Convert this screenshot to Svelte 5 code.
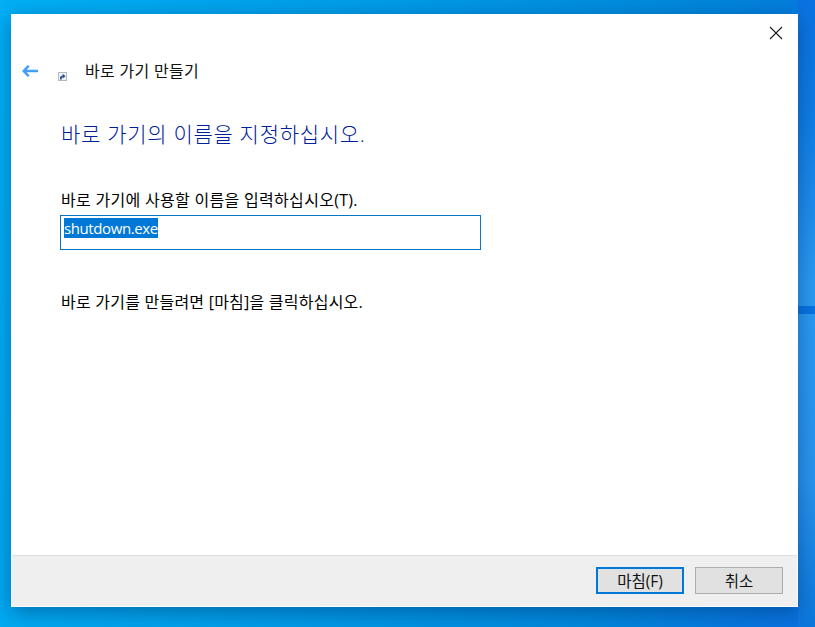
<script lang="ts">
  let name = 'shutdown.exe';
</script>

<div class="desktop">
  <div class="strip"></div>
  <div class="window">
    <div class="titlebar">
      <button class="close" aria-label="닫기">
        <svg width="14" height="14" viewBox="0 0 14 14"><path d="M1 1L13 13M13 1L1 13" stroke="#1a1a1a" stroke-width="1.1" fill="none" /></svg>
      </button>
    </div>
    <div class="nav">
      <svg class="back" width="16" height="12" viewBox="0 0 16 12"><path d="M6.7 0.8L1.7 6L6.7 11.2M1.7 6H16" stroke="#429ffa" stroke-width="2.5" fill="none" /></svg>
      <svg class="shortcut" width="9" height="9" viewBox="0 0 9 9">
        <rect x="0.5" y="0.5" width="8" height="8" fill="#f2f2f2" stroke="#b4b8bd" />
        <path d="M2 7.5V4.8L4.6 3.4V1.8L7.6 4.2L4.6 6.4V5L3.8 5.5V7.5Z" fill="#24508f" />
      </svg>
      <span class="title">바로 가기 만들기</span>
    </div>
    <div class="content">
      <h1>바로 가기의 이름을 지정하십시오.</h1>
      <label for="sname">바로 가기에 사용할 이름을 입력하십시오(T).</label>
      <div class="input" id="sname"><span class="sel">{name}</span></div>
      <p>바로 가기를 만들려면 [마침]을 클릭하십시오.</p>
    </div>
    <div class="footer">
      <button class="btn primary">마침(F)</button>
      <button class="btn">취소</button>
    </div>
  </div>
</div>

<style>
  :global(body) { margin: 0; overflow: hidden; }
  .desktop {
    position: relative;
    width: 815px;
    height: 627px;
    box-sizing: border-box;
    padding: 14px 17px 20px 11px;
    background: linear-gradient(100deg, #00b0f6 0%, #00a0ea 35%, #0088dc 75%, #0a70e0 100%);
    font-family: "Open Sans", "Noto Sans CJK KR", sans-serif;
    color: #000;
  }
  .strip {
    position: absolute;
    right: 0;
    top: 0;
    width: 17px;
    height: 627px;
    background: linear-gradient(#0a72e2 0, #0f7ee6 120px, #2a9af2 280px, #2a9af2 306px, #0873e2 306px, #0873e2 314px, #2a9af2 314px, #2a94ee 480px, #0a78dc 627px);
  }
  .window {
    position: relative;
    height: 593px;
    display: flex;
    flex-direction: column;
    background: #fff;
    box-shadow: 0 5px 20px rgba(0, 40, 90, 0.45);
  }
  .titlebar { height: 38px; display: flex; justify-content: flex-end; }
  .close { border: 0; background: none; padding: 0; margin: 12px 15px 0 0; width: 14px; height: 14px; display: block; }
  .close svg { display: block; }
  .nav { display: flex; align-items: center; height: 38px; }
  .back { margin-left: 11px; }
  .shortcut { margin: 11px 0 0 20px; }
  .title { margin-left: 18px; font-size: 16px; letter-spacing: 0.3px; line-height: 38px; color: #111; }
  .content { flex: 1; padding: 0 0 0 49px; }
  h1 { margin: 29px 0 0 1px; font-size: 21px; letter-spacing: 0.7px; font-weight: 300; line-height: 30px; color: #00209a; }
  label { display: block; margin: 40px 0 0 1px; font-size: 16px; letter-spacing: 0.3px; line-height: 22px; }
  .input {
    box-sizing: border-box;
    width: 421px;
    height: 35px;
    margin-top: 4px;
    padding: 2px 0 0 3px;
    border: 1px solid #0a74c4;
    font-size: 15px;
    letter-spacing: -0.4px;
    line-height: 20px;
  }
  .sel { display: inline-block; background: #0078d7; color: #fff; }
  p { margin: 41px 0 0 1px; font-size: 16px; letter-spacing: 0.23px; line-height: 22px; }
  .footer {
    height: 51px;
    margin: 0 1px 1px;
    display: flex;
    justify-content: flex-end;
    align-items: flex-start;
    gap: 11px;
    padding: 11px 14px 0 0;
    box-sizing: border-box;
    background: #efefef;
    border-top: 1px solid #dfdfdf;
  }
  .btn {
    box-sizing: border-box;
    width: 88px;
    height: 27px;
    padding: 0;
    background: #e1e1e1;
    border: 1px solid #adadad;
    font-family: inherit;
    font-size: 15.5px;
    line-height: 22px;
    color: #111;
  }
  .primary { border: 2px solid #0078d7; }
</style>
